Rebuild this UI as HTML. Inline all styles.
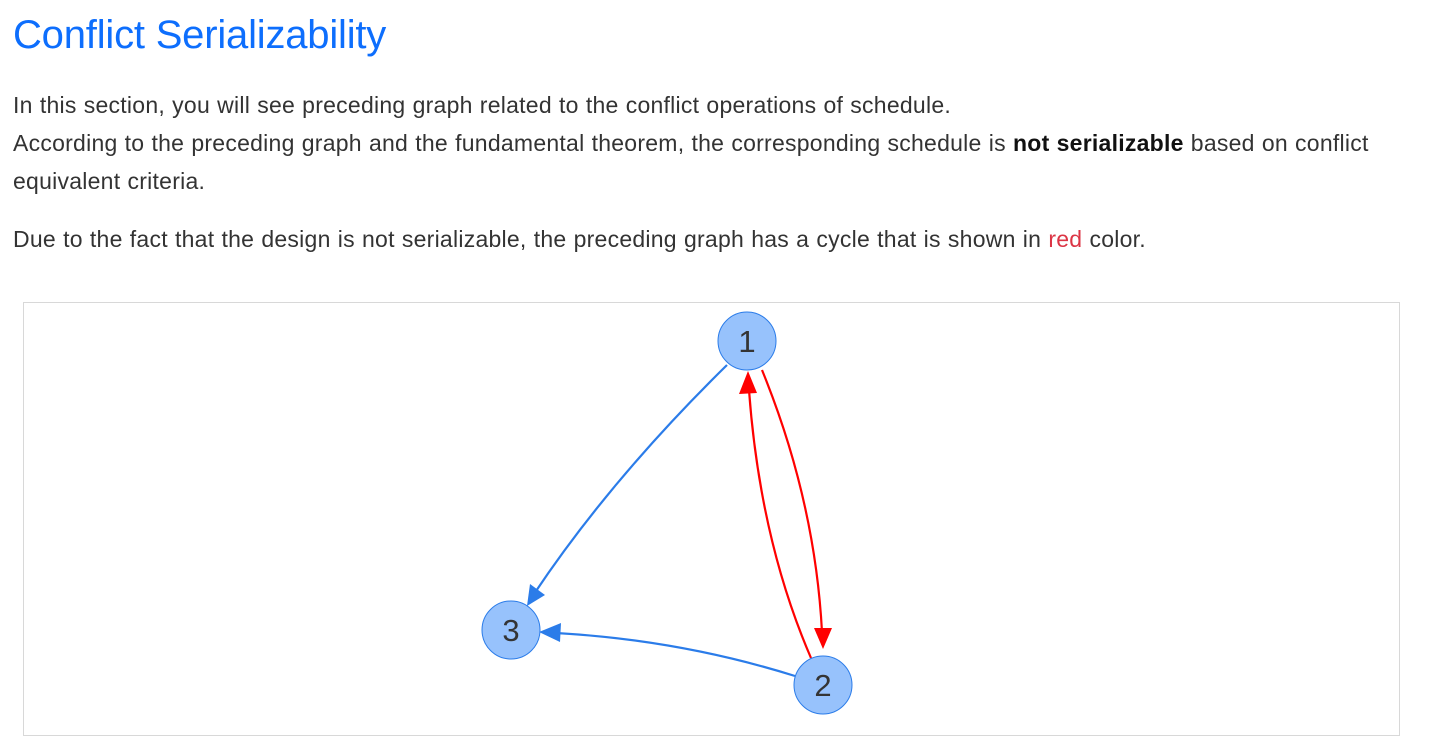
<!DOCTYPE html>
<html><head><style>
body{margin:0;background:#fff;font-family:"Liberation Sans",sans-serif;color:#212529;}
h1{position:absolute;left:13px;top:13px;margin:0;font-size:40px;font-weight:400;color:#0d6efd;letter-spacing:-0.2px}
.p{position:absolute;left:13px;font-size:23px;line-height:38px;margin:0;letter-spacing:0.25px;word-spacing:0.5px;white-space:nowrap;color:#333}
.box{position:absolute;left:23px;top:302px;width:1375px;height:432px;border:1px solid #d8d8d8}
</style></head><body>
<h1>Conflict Serializability</h1>
<p class="p" style="top:86px">In this section, you will see preceding graph related to the conflict operations of schedule.<br>According to the preceding graph and the fundamental theorem, the corresponding schedule is <b style="font-weight:600;color:#111">not serializable</b> based on conflict<br>equivalent criteria.</p>
<p class="p" style="top:220px">Due to the fact that the design is not serializable, the preceding graph has a cycle that is shown in <span style="color:#dc3545">red</span> color.</p>
<div class="box"></div>
<svg width="1435" height="755" style="position:absolute;left:0;top:0">
<g fill="none" stroke-width="2.2">
<path d="M727 365 Q610 480 534 594" stroke="#2b7ce9"/>
<path d="M795 676 Q680 640 556 633" stroke="#2b7ce9"/>
<path d="M762 370 Q815 500 822 632" stroke="#ff0000"/>
<path d="M811 658 Q760 540 749 390" stroke="#ff0000"/>
</g>
<polygon points="527,606 530,584 545,595" fill="#2b7ce9"/>
<polygon points="539,632 561,623 560,642" fill="#2b7ce9"/>
<polygon points="823,649 814,628 832,628" fill="#ff0000"/>
<polygon points="748,371 739,394 757,393" fill="#ff0000"/>
<g fill="#97c2fc" stroke="#2b7ce9" stroke-width="1">
<circle cx="747" cy="341" r="29"/><circle cx="511" cy="630" r="29"/><circle cx="823" cy="685" r="29"/>
</g>
<g font-family="Liberation Sans,sans-serif" font-size="31" fill="#343434" text-anchor="middle">
<text x="747" y="352">1</text><text x="511" y="641">3</text><text x="823" y="696">2</text>
</g>
</svg>
</body></html>
